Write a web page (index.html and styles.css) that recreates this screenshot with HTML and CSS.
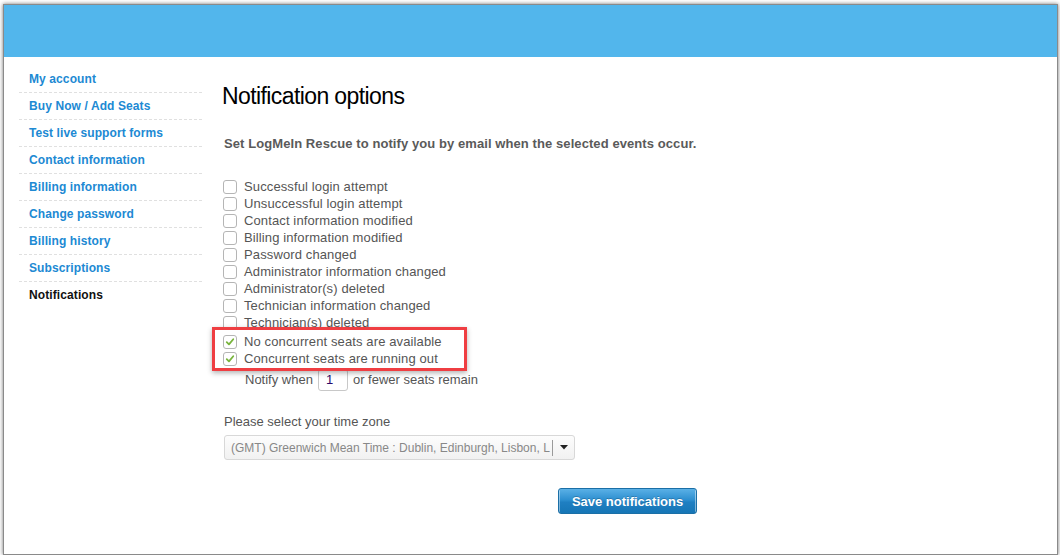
FILE: index.html
```html
<!DOCTYPE html>
<html>
<head>
<meta charset="utf-8">
<link rel="stylesheet" href="styles.css">
<title>Notification options</title>
</head>
<body>
<div class="window">
  <header class="topbar"></header>
  <div class="page">
    <nav class="sidebar">
      <a class="nav-item" href="#">My account</a>
      <a class="nav-item" href="#">Buy Now / Add Seats</a>
      <a class="nav-item" href="#">Test live support forms</a>
      <a class="nav-item" href="#">Contact information</a>
      <a class="nav-item" href="#">Billing information</a>
      <a class="nav-item" href="#">Change password</a>
      <a class="nav-item" href="#">Billing history</a>
      <a class="nav-item" href="#">Subscriptions</a>
      <a class="nav-item current" href="#">Notifications</a>
    </nav>
    <main class="content">
      <h1 class="title">Notification options</h1>
      <p class="intro">Set LogMeIn Rescue to notify you by email when the selected events occur.</p>
      <div class="checklist">
        <label class="check"><span class="box"></span>Successful login attempt</label>
        <label class="check"><span class="box"></span>Unsuccessful login attempt</label>
        <label class="check"><span class="box"></span>Contact information modified</label>
        <label class="check"><span class="box"></span>Billing information modified</label>
        <label class="check"><span class="box"></span>Password changed</label>
        <label class="check"><span class="box"></span>Administrator information changed</label>
        <label class="check"><span class="box"></span>Administrator(s) deleted</label>
        <label class="check"><span class="box"></span>Technician information changed</label>
        <label class="check"><span class="box"></span>Technician(s) deleted</label>
        <label class="check checked first-checked"><span class="box"><svg viewBox="0 0 14 14" width="14" height="14"><path d="M3.2 7.2 L5.8 9.8 L10.8 3.8" fill="none" stroke="#78b43c" stroke-width="2.1" stroke-linecap="round" stroke-linejoin="round"/></svg></span>No concurrent seats are available</label>
        <label class="check checked"><span class="box"><svg viewBox="0 0 14 14" width="14" height="14"><path d="M3.2 7.2 L5.8 9.8 L10.8 3.8" fill="none" stroke="#78b43c" stroke-width="2.1" stroke-linecap="round" stroke-linejoin="round"/></svg></span>Concurrent seats are running out</label>
        <div class="notify">Notify when <span class="num">1</span> or fewer seats remain</div>
        <div class="highlight"></div>
      </div>
      <div class="tz-label">Please select your time zone</div>
      <div class="select">
        <span class="select-text">(GMT) Greenwich Mean Time : Dublin, Edinburgh, Lisbon, L</span>
        <span class="select-arrow"><svg viewBox="0 0 8 5" width="8" height="5"><path d="M0 0 H8 L4 4.5 Z" fill="#222"/></svg></span>
      </div>
      <div class="actions">
        <button class="save" type="button">Save notifications</button>
      </div>
    </main>
  </div>
</div>
</body>
</html>
```

FILE: styles.css
```css
html, body {
  margin: 0;
  padding: 0;
  background: #ffffff;
}
body {
  font-family: "Liberation Sans", Arial, sans-serif;
  overflow: hidden;
}
.window {
  margin: 4px 2px 0 3px;
  height: 549px;
  border: 1px solid #8a8a8a;
  box-shadow: 0 0 4px rgba(0, 0, 0, 0.55);
  background: #fff;
  display: flex;
  flex-direction: column;
}
.topbar {
  height: 52px;
  background: #52b6ec;
  flex: none;
}
.page {
  display: flex;
  gap: 20px;
  padding-left: 15px;
}
.sidebar {
  width: 183px;
  padding-top: 9px;
  display: flex;
  flex-direction: column;
}
.nav-item {
  display: block;
  height: 26px;
  line-height: 26px;
  padding-left: 10px;
  border-bottom: 1px dashed #e0e0e0;
  font-size: 12px;
  font-weight: bold;
  letter-spacing: 0.1px;
  color: #2089d3;
  text-decoration: none;
}
.nav-item.current {
  color: #111;
  border-bottom: none;
}
.content {
  flex: 1;
  padding-top: 25px;
}
.title {
  margin: 0;
  font-size: 23px;
  line-height: 28px;
  font-weight: normal;
  letter-spacing: -0.6px;
  color: #000;
}
.intro {
  margin: 26px 0 0 2px;
  font-size: 13px;
  line-height: 16px;
  font-weight: bold;
  letter-spacing: 0.08px;
  color: #5a5a5a;
}
.checklist {
  position: relative;
  margin-top: 26px;
}
.check {
  display: flex;
  align-items: center;
  height: 17px;
  font-size: 13px;
  letter-spacing: 0.12px;
  color: #555;
  padding-left: 1px;
}
.check.first-checked {
  margin-top: 2px;
}
.box {
  width: 12px;
  height: 12px;
  border: 1px solid #b5b5b5;
  border-radius: 3px;
  background: #fff;
  margin-right: 7px;
  display: flex;
  align-items: center;
  justify-content: center;
  flex: none;
}
.notify {
  display: flex;
  align-items: center;
  height: 25px;
  padding-left: 23px;
  font-size: 13px;
  color: #555;
}
.num {
  display: inline-block;
  box-sizing: border-box;
  width: 30px;
  height: 22px;
  line-height: 20px;
  margin: 0 5px 0 5px;
  padding-left: 7px;
  border: 1px solid #c8c8c8;
  border-radius: 3px;
  color: #2a0a6a;
  font-size: 13px;
}
.highlight {
  position: absolute;
  left: -10px;
  top: 149px;
  width: 249px;
  height: 38px;
  border: 3px solid #ef3e42;
  box-shadow: 0 2px 5px rgba(0, 0, 0, 0.3);
  pointer-events: none;
}
.tz-label {
  margin: 22px 0 0 2px;
  font-size: 13px;
  line-height: 16px;
  color: #555;
}
.select {
  margin: 5px 0 0 2px;
  width: 351px;
  height: 25px;
  box-sizing: border-box;
  border: 1px solid #d8d8d8;
  border-radius: 3px;
  background: linear-gradient(#fdfdfd, #f1f1f1);
  display: flex;
  align-items: center;
  font-size: 12px;
  color: #888;
}
.select-text {
  flex: 1;
  padding-left: 6px;
  white-space: nowrap;
  overflow: hidden;
  border-right: 1px solid #9a9a9a;
  line-height: 16px;
}
.select-arrow {
  width: 21px;
  display: flex;
  justify-content: center;
  align-items: center;
}
.actions {
  margin-top: 28px;
  padding-left: 336px;
}
.save {
  width: 139px;
  height: 26px;
  border: 1px solid #1b6fa6;
  border-radius: 3px;
  background: linear-gradient(#5ab0e6 0%, #2d8fd0 45%, #1f7fc2 55%, #1676b6 100%);
  box-shadow: inset 5px 0 0 -4px rgba(255,255,255,0.45), inset -9px 0 0 -8px rgba(255,255,255,0.45);
  color: #fff;
  font-family: "Liberation Sans", Arial, sans-serif;
  font-size: 13px;
  font-weight: bold;
  padding: 0;
  text-shadow: 0 -1px 0 rgba(0,0,0,0.2);
}
```
